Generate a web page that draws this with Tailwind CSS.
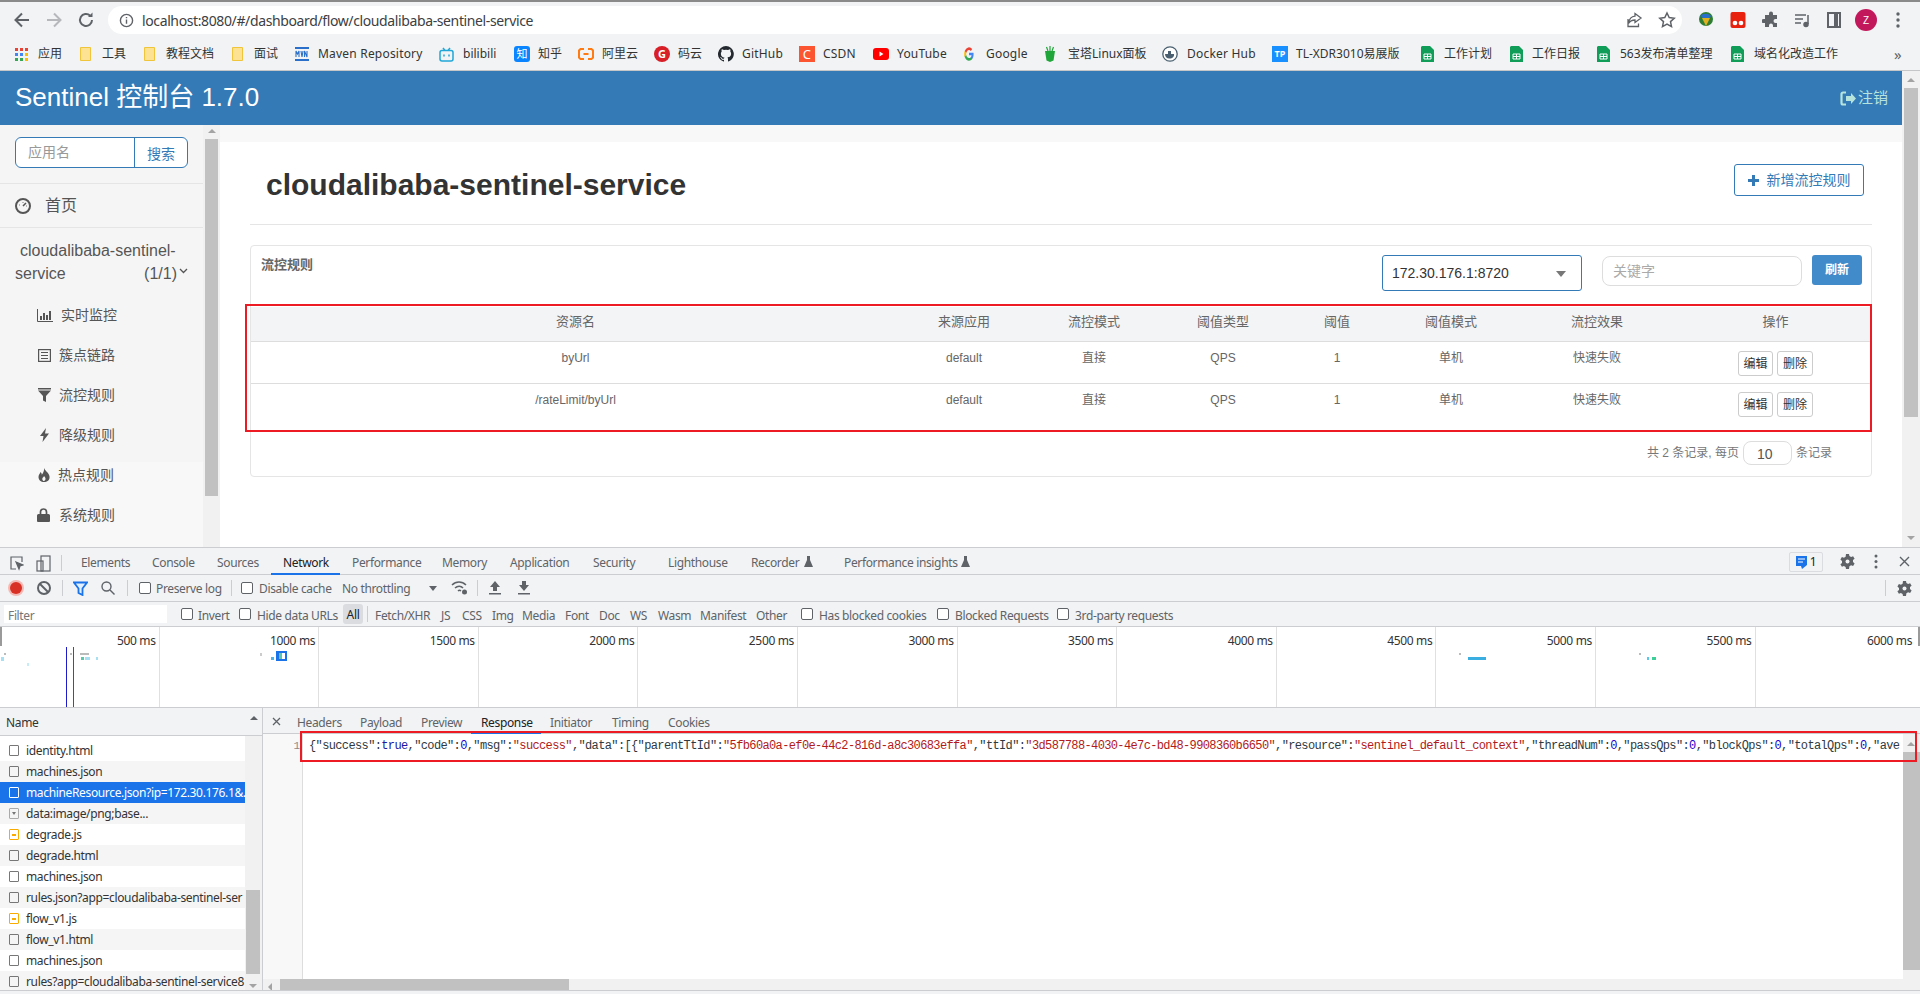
<!DOCTYPE html>
<html lang="en">
<head>
    <meta charset="UTF-8">
    <title>Sentinel Dashboard</title>
    <script src="https://cdn.jsdelivr.net/npm/@tailwindcss/browser@4"></script>
</head>
<body class="w-[1920px] h-[994px] overflow-hidden bg-[#f1f3f4] flex flex-col [font-family:'Liberation_Sans','Noto_Sans_CJK_SC',sans-serif]">

    <!-- browser toolbar -->
    <div class="h-[38px] shrink-0 flex items-center bg-[#f1f3f4] border-t-2 border-[#8a8a8a] relative">
        <svg class="ml-[12px] w-[20px] h-[20px]" viewBox="0 0 20 20" fill="none" stroke="#5f6368" stroke-width="2"><path d="M17 10H4M10 3.5 3.5 10l6.5 6.5"/></svg>
        <svg class="ml-[12px] w-[20px] h-[20px]" viewBox="0 0 20 20" fill="none" stroke="#b5b7ba" stroke-width="2"><path d="M3 10h13M10 3.5l6.500 6.500-6.500 6.500"/></svg>
        <svg class="ml-[12px] w-[20px] h-[20px]" viewBox="0 0 20 20" fill="none" stroke="#5f6368" stroke-width="2"><path d="M16 10a6 6 0 1 1-1.800-4.300"/><path d="M16.500 2.500v4.500H12" fill="#5f6368" stroke="none"/></svg>
        <div class="ml-[12px] w-[1574px] h-[28px] bg-white rounded-full flex items-center">
            <svg class="ml-[11px] w-[15px] h-[15px]" viewBox="0 0 16 16" fill="none" stroke="#5f6368" stroke-width="1.500"><circle cx="8" cy="8" r="6.500"/><path d="M8 7v4.500M8 4.200v1.500"/></svg>
            <span class="ml-[8px] text-[14px] text-[#3c4043] [font-family:'Noto_Sans',sans-serif] tracking-[-0.380px]">localhost:8080/#/dashboard/flow/cloudalibaba-sentinel-service</span>
            <svg class="ml-auto w-[18px] h-[18px]" viewBox="0 0 18 18" fill="none" stroke="#5f6368" stroke-width="1.300"><path d="M10 2.500 16 7l-6 4.500V9c-3 0-5 1-6.500 3.500C4 9 6 5.500 10 5.200zM3 8v7.500h10.500v-3"/></svg>
            <svg class="ml-[15px] mr-[6px] w-[18px] h-[18px]" viewBox="0 0 18 18" fill="none" stroke="#5f6368" stroke-width="1.500"><path d="m9 2 2.200 4.600 5 .6-3.700 3.400 1 5L9 13.100l-4.500 2.500 1-5L1.800 7.200l5-.6z"/></svg>
        </div>
        <svg class="ml-[15px] w-[18px] h-[18px]" viewBox="0 0 18 18"><circle cx="9" cy="8" r="7" fill="#2f7d32"/><path d="M3 5c3-3 8-3 11 0l-4 5z" fill="#2a6fc9"/><path d="M9 7h4l-4 8-4-8z" fill="#e0b020"/></svg>
        <svg class="ml-[15px] w-[16px] h-[18px]" viewBox="0 0 16 18"><rect x="0.500" y="1" width="15" height="16" rx="2" fill="#e8210f"/><circle cx="5" cy="12" r="2.300" fill="#fff"/><circle cx="11" cy="12" r="2.300" fill="#fff"/></svg>
        <svg class="ml-[16px] w-[18px] h-[18px]" viewBox="0 0 18 18" fill="#5f6368"><path d="M7 2.500a2 2 0 0 1 4 0V4h4v4h-1.500a2 2 0 0 0 0 4H15v4h-4v-1.500a2 2 0 0 0-4 0V16H3v-4H1.500a2 2 0 0 1 0-4H3V4h4z"/></svg>
        <svg class="ml-[13px] w-[18px] h-[18px]" viewBox="0 0 18 18" fill="none" stroke="#5f6368" stroke-width="1.500"><path d="M2 4h11M2 8h8M2 12h6M15 4v9"/><circle cx="13" cy="13.500" r="2" fill="#5f6368"/></svg>
        <svg class="ml-[14px] w-[18px] h-[18px]" viewBox="0 0 18 18" fill="none" stroke="#5f6368" stroke-width="2"><rect x="3" y="2" width="12" height="14"/><path d="M11 2v14" stroke-width="4"/></svg>
        <div class="ml-[12px] w-[22px] h-[22px] rounded-full bg-[#c2185b] text-white text-[10px] flex items-center justify-center">Z</div>
        <svg class="ml-[19px] w-[4px] h-[16px]" viewBox="0 0 4 16" fill="#5f6368"><circle cx="2" cy="2" r="1.700"/><circle cx="2" cy="8" r="1.700"/><circle cx="2" cy="14" r="1.700"/></svg>
    </div>

    <!-- bookmarks -->
    <div class="h-[33px] shrink-0 flex items-center bg-[#f1f3f4] border-b border-[#c4c6c8] pl-[15px] text-[12px] text-[#333] [font-family:'Noto_Sans','Noto_Sans_CJK_SC',sans-serif] whitespace-nowrap">
        <div class="w-[65px] flex items-center gap-[10px]">
            <svg class="w-[13px] h-[13px]" viewBox="0 0 13 13"><rect width="3" height="3" fill="#ea4335"/><rect x="5" width="3" height="3" fill="#ea4335"/><rect x="10" width="3" height="3" fill="#ea4335"/><rect y="5" width="3" height="3" fill="#4285f4"/><rect x="5" y="5" width="3" height="3" fill="#4285f4"/><rect x="10" y="5" width="3" height="3" fill="#fbbc04"/><rect y="10" width="3" height="3" fill="#34a853"/><rect x="5" y="10" width="3" height="3" fill="#34a853"/><rect x="10" y="10" width="3" height="3" fill="#fbbc04"/></svg>应用</div>
        <div class="w-[64px] flex items-center gap-[11px]"><svg class="w-[11px] h-[14px]" viewBox="0 0 11 14"><path d="M.5.5h10v13H.5z" fill="#fde293" stroke="#f0c53a"/></svg>工具</div>
        <div class="w-[88px] flex items-center gap-[11px]"><svg class="w-[11px] h-[14px]" viewBox="0 0 11 14"><path d="M.5.5h10v13H.5z" fill="#fde293" stroke="#f0c53a"/></svg>教程文档</div>
        <div class="w-[63px] flex items-center gap-[11px]"><svg class="w-[11px] h-[14px]" viewBox="0 0 11 14"><path d="M.5.5h10v13H.5z" fill="#fde293" stroke="#f0c53a"/></svg>面试</div>
        <div class="w-[144px] flex items-center gap-[9px] tracking-[0.200px]"><svg class="w-[14px] h-[14px]" viewBox="0 0 14 14"><rect width="14" height="2" fill="#2a6fc9"/><rect y="12" width="14" height="2" fill="#2a6fc9"/><path d="M1 10V4l1.500 3L4 4v6M6 4l1 6 1-6M9.500 10V4L12 10V4" fill="none" stroke="#2a6fc9" stroke-width="1.100"/></svg>Maven Repository</div>
        <div class="w-[75px] flex items-center gap-[9px]"><svg class="w-[15px] h-[15px]" viewBox="0 0 15 15" fill="none" stroke="#20a7d8" stroke-width="1.500"><rect x="1" y="3.500" width="13" height="10.500" rx="2"/><path d="M4 1l2 2.500M11 1 9 3.500M5 7.500v2M10 7.500v2"/></svg>bilibili</div>
        <div class="w-[64px] flex items-center gap-[8px]"><div class="w-[16px] h-[16px] rounded-[3px] bg-[#0a84ff] text-white text-[11px] leading-[16px] text-center">知</div>知乎</div>
        <div class="w-[76px] flex items-center gap-[8px]"><svg class="w-[16px] h-[12px]" viewBox="0 0 16 12" fill="none" stroke="#ff7a13" stroke-width="2"><path d="M6 1H2.500L1 2.500v7L2.500 11H6M10 1h3.500L15 2.500v7L13.500 11H10M5.500 6h5"/></svg>阿里云</div>
        <div class="w-[64px] flex items-center gap-[8px]"><div class="w-[16px] h-[16px] rounded-full bg-[#d81e26] text-white text-[11px] font-bold leading-[16px] text-center">G</div>码云</div>
        <div class="w-[81px] flex items-center gap-[8px] tracking-[0.200px]"><svg class="w-[16px] h-[16px]" viewBox="0 0 16 16" fill="#24292f"><path d="M8 0a8 8 0 0 0-2.500 15.600c.4.100.5-.2.500-.4v-1.400c-2.200.5-2.700-1-2.700-1-.4-.9-.9-1.200-.9-1.200-.7-.5.100-.5.100-.5.800.100 1.200.8 1.200.8.700 1.200 1.900.9 2.300.7.100-.5.300-.9.500-1.100-1.800-.2-3.600-.9-3.600-4 0-.9.300-1.600.8-2.100-.1-.2-.4-1 .1-2.100 0 0 .7-.2 2.200.8a7.600 7.600 0 0 1 4 0c1.500-1 2.200-.8 2.200-.8.400 1.100.2 1.900.1 2.100.5.600.8 1.300.8 2.100 0 3.100-1.900 3.700-3.700 3.900.3.300.6.800.6 1.500v2.200c0 .2.100.5.600.4A8 8 0 0 0 8 0z"/></svg>GitHub</div>
        <div class="w-[74px] flex items-center gap-[8px] tracking-[0.200px]"><div class="w-[16px] h-[16px] bg-[#fc5531] text-white text-[13px] leading-[16px] text-center">C</div>CSDN</div>
        <div class="w-[91px] flex items-center gap-[8px] tracking-[0.200px]"><svg class="w-[16px] h-[12px]" viewBox="0 0 16 12"><rect width="16" height="12" rx="3" fill="#f00"/><path d="m6.500 3.500 4 2.500-4 2.500z" fill="#fff"/></svg>YouTube</div>
        <div class="w-[80px] flex items-center gap-[12px] tracking-[0.200px]"><svg class="w-[10px] h-[14px]" viewBox="0 0 24 24" preserveAspectRatio="none"><path d="M23 12.300c0-.8-.1-1.500-.2-2.300H12v4.300h6.200a5.300 5.300 0 0 1-2.300 3.500v2.900h3.700c2.100-2 3.400-4.900 3.400-8.400z" fill="#4285f4"/><path d="M12 23.500c3.100 0 5.700-1 7.600-2.800l-3.700-2.900c-1 .7-2.300 1.100-3.900 1.100-3 0-5.500-2-6.400-4.800H1.800v3A11.500 11.500 0 0 0 12 23.500z" fill="#34a853"/><path d="M5.600 14.100a7 7 0 0 1 0-4.400v-3H1.800a11.500 11.500 0 0 0 0 10.400z" fill="#fbbc04"/><path d="M12 5c1.700 0 3.200.6 4.400 1.700l3.300-3.300A11.500 11.500 0 0 0 1.800 6.700l3.800 3C6.500 7 9 5 12 5z" fill="#ea4335"/></svg>Google</div>
        <div class="w-[118px] flex items-center gap-[12px]"><svg class="w-[12px] h-[16px]" viewBox="0 0 12 16"><path d="M1 5h10l-1.500 9.500L6 16l-3.500-1.500z" fill="#20a53a"/><path d="M6 0v5M2.500 1 4 5M9.500 1 8 5" stroke="#20a53a" stroke-width="1.200"/></svg>宝塔Linux面板</div>
        <div class="w-[110px] flex items-center gap-[9px] tracking-[0.200px]"><svg class="w-[16px] h-[16px]" viewBox="0 0 16 16"><circle cx="8" cy="8" r="7.200" fill="#fff" stroke="#4a6070" stroke-width="1.300"/><path d="M3 8h9c.5 2.500-1.500 4.500-4.500 4.500S3 10.500 3 8z" fill="#4a6070"/><rect x="6" y="5" width="3" height="3" fill="#4a6070"/></svg>Docker Hub</div>
        <div class="w-[149px] flex items-center gap-[8px]"><div class="w-[16px] h-[16px] bg-[#1890ff] text-white text-[9px] font-bold leading-[16px] text-center">TP</div>TL-XDR3010易展版</div>
        <div class="w-[89px] flex items-center gap-[10px]"><svg class="w-[13px] h-[16px]" viewBox="0 0 13 16"><path d="M1 0h8l4 4v12H0V1z" fill="#0f9d58"/><path d="M3 8h7v5H3zM6.500 8v5M3 10.500h7" fill="none" stroke="#fff"/></svg>工作计划</div>
        <div class="w-[87px] flex items-center gap-[9px]"><svg class="w-[13px] h-[16px]" viewBox="0 0 13 16"><path d="M1 0h8l4 4v12H0V1z" fill="#0f9d58"/><path d="M3 8h7v5H3zM6.500 8v5M3 10.500h7" fill="none" stroke="#fff"/></svg>工作日报</div>
        <div class="w-[134px] flex items-center gap-[10px]"><svg class="w-[13px] h-[16px]" viewBox="0 0 13 16"><path d="M1 0h8l4 4v12H0V1z" fill="#0f9d58"/><path d="M3 8h7v5H3zM6.500 8v5M3 10.500h7" fill="none" stroke="#fff"/></svg>563发布清单整理</div>
        <div class="w-[163px] flex items-center gap-[10px]"><svg class="w-[13px] h-[16px]" viewBox="0 0 13 16"><path d="M1 0h8l4 4v12H0V1z" fill="#0f9d58"/><path d="M3 8h7v5H3zM6.500 8v5M3 10.500h7" fill="none" stroke="#fff"/></svg>域名化改造工作</div>
        <span class="text-[15px] text-[#5f6368]">»</span>
    </div>

    <!-- page -->
    <div class="h-[476px] shrink-0 flex bg-white">
        <div class="w-[1902px] flex flex-col">
            <div class="h-[54px] shrink-0 bg-[#337ab7] flex items-center justify-between pl-[15px] pr-[14px]">
                <span class="text-[26px] text-white -mt-[2px]">Sentinel 控制台 1.7.0</span>
                <span class="flex items-center gap-[1px] text-[15px] text-[#b7e3dd]">
                    <svg class="w-[17px] h-[15px]" viewBox="0 0 17 15"><path d="M6 1.500H3A1.500 1.500 0 0 0 1.500 3v9A1.500 1.500 0 0 0 3 13.500h3" fill="none" stroke="#b7e3dd" stroke-width="2.200"/><path d="M6 5h5V2l5 5.500-5 5.500V10H6z" fill="#b7e3dd"/></svg>注销</span>
            </div>
            <div class="flex flex-1 min-h-0">
                <!-- sidebar -->
                <div class="w-[203px] shrink-0 flex flex-col text-[#555] relative bg-[#f8f8f8]">
                    <div class="h-[337px] bg-[#f5f5f5] flex flex-col">
                        <div class="h-[59px] shrink-0 border-b border-[#e5e5e5] pl-[15px] pt-[12px]">
                            <div class="w-[173px] h-[31px] flex border border-[#337ab7] rounded-[6px] bg-white text-[14px]">
                                <div class="w-[119px] border-r border-[#337ab7] pl-[12px] leading-[28px] text-[#999]">应用名</div>
                                <div class="flex-1 text-center leading-[32px] text-[#337ab7]">搜索</div>
                            </div>
                        </div>
                        <div class="h-[44px] shrink-0 border-b border-[#e5e5e5] flex items-center pl-[15px] gap-[14px] text-[16px]">
                            <svg class="w-[16px] h-[16px]" viewBox="0 0 16 16" fill="none" stroke="#555" stroke-width="2"><circle cx="8" cy="8" r="7"/><path d="M8 8l3-3M4 7h.5M8 4v.5M12 8h-.5" stroke-width="1.500"/></svg>
                            首页
                        </div>
                        <div class="pl-[15px] pt-[11px] text-[16px] leading-[23px] w-[188px]">
                            <div class="pl-[5px]">cloudalibaba-sentinel-</div>
                            <div class="flex items-center">service<span class="ml-auto">(1/1)</span>
                                <svg class="ml-[2px] w-[9px] h-[6px] -mt-[5px]" viewBox="0 0 9 6" fill="none" stroke="#555" stroke-width="1.300"><path d="m1 1 3.500 3.500L8 1"/></svg>
                            </div>
                        </div>
                        <div class="mt-[10px] flex flex-col text-[14px]">
                            <div class="h-[40px] flex items-center pl-[37px] gap-[8px]"><svg class="w-[16px] h-[13px]" viewBox="0 0 16 13" fill="none" stroke="#555"><path d="M.5 0v12.500H16" /><path d="M4 11V7M7 11V4M10 11V6M13 11V2" stroke-width="2"/></svg>实时监控</div>
                            <div class="h-[40px] flex items-center pl-[38px] gap-[8px]"><svg class="w-[13px] h-[13px]" viewBox="0 0 13 13" fill="none" stroke="#555" stroke-width="1.200"><rect x=".6" y=".6" width="11.800" height="11.800"/><path d="M3 3.500h7M3 6.500h7M3 9.500h7"/></svg>簇点链路</div>
                            <div class="h-[40px] flex items-center pl-[38px] gap-[8px]"><svg class="w-[13px] h-[14px]" viewBox="0 0 13 14" fill="#555"><path d="M0 0h13v1.500H0zM0 2.500h13L8 8v6L5 12.500V8z"/></svg>流控规则</div>
                            <div class="h-[40px] flex items-center pl-[40px] gap-[10px]"><svg class="w-[9px] h-[14px]" viewBox="0 0 9 14" fill="#555"><path d="M6 0 0 8h3.500L2.500 14 9 5.500H5z"/></svg>降级规则</div>
                        </div>
                    </div>
                    <div class="flex flex-col text-[14px]">
                        <div class="h-[40px] -mt-[7px] flex items-center pl-[38px] gap-[8px]"><svg class="w-[12px] h-[14px]" viewBox="0 0 12 14" fill="#555"><path d="M6 0c1 3 5 4.500 5.500 8.500S9 14 6 14s-5.500-2-5.500-5C.5 7 2 5.500 2.500 4c1 .8 1.300 1.800 1.300 2.800C5 5 6.500 3 6 0z"/><path d="M6 8c.8 1.200 1.800 2 1.500 3.300S6.500 13 6 13s-1.700-.5-1.700-2S5.500 9.500 6 8z" fill="#f8f8f8"/></svg>热点规则</div>
                        <div class="h-[40px] flex items-center pl-[37px] gap-[9px]"><svg class="w-[13px] h-[14px]" viewBox="0 0 13 14" fill="#555"><path d="M1.500 6h10A1.500 1.500 0 0 1 13 7.500V13a1 1 0 0 1-1 1H1a1 1 0 0 1-1-1V7.500A1.500 1.500 0 0 1 1.500 6z"/><path d="M3.500 6V4a3 3 0 0 1 6 0v2" fill="none" stroke="#555" stroke-width="1.700"/></svg>系统规则</div>
                    </div>
                </div>
                <!-- sidebar scrollbar -->
                <div class="w-[17px] shrink-0 bg-[#f1f1f1] flex flex-col items-center pt-[4px]">
                    <div class="w-0 h-0 border-x-[4px] border-x-transparent border-b-[4px] border-b-[#a3a3a3]"></div>
                    <div class="w-[13px] h-[357px] mt-[6px] bg-[#c1c1c1]"></div>
                </div>
                <!-- main -->
                <div class="flex-1 min-w-0 flex flex-col">
                    <div class="h-[17px] shrink-0 bg-[#f8f8f8]"></div>
                    <div class="flex-1 px-[30px]">
                        <div class="h-[83px] border-b border-[#e5e5e5] flex justify-between items-start">
                            <h1 class="ml-[16px] mt-[23px] text-[30px] leading-[40px] font-bold text-[#333]">cloudalibaba-sentinel-service</h1>
                            <button class="mr-[8px] mt-[22px] w-[130px] h-[32px] border border-[#337ab7] rounded-[3px] text-[14px] text-[#337ab7] flex items-center justify-center gap-[8px] bg-white">
                                <svg class="w-[11px] h-[11px]" viewBox="0 0 11 11" fill="#337ab7"><path d="M4 0h3v4h4v3H7v4H4V7H0V4h4z"/></svg>新增流控规则</button>
                        </div>
                        <div class="relative mt-[20px] h-[232px] border border-[#e5e5e5] rounded-[4px]">
                            <div class="flex h-[60px] pl-[10px] pr-[9px] pt-[9px]">
                                <div class="text-[13px] font-bold text-[#666] leading-[20px]">流控规则</div>
                                <div class="ml-auto relative w-[200px] h-[36px] border border-[#337ab7] rounded-[3px] pl-[9px] text-[14px] leading-[34px] text-[#333]">172.30.176.1:8720
                                    <div class="absolute right-[15px] top-[15px] w-0 h-0 border-x-[5px] border-x-transparent border-t-[6px] border-t-[#777]"></div>
                                </div>
                                <div class="ml-[20px] w-[200px] h-[30px] border border-[#ddd] rounded-[8px] pl-[10px] text-[14px] leading-[28px] text-[#aaa] mt-[1px]">关键字</div>
                                <button class="ml-[10px] w-[50px] h-[30px] bg-[#428bca] rounded-[3px] text-white text-[12px] font-bold">刷新</button>
                            </div>
                            <div class="grid grid-cols-[649px_128px_132px_126px_102px_126px_166px_191px] text-center text-[12px] text-[#666]">
                                <div class="col-span-8 grid grid-cols-subgrid h-[35px] mt-px bg-[#f3f4f6] border-b border-[#ddd] text-[13px] leading-[30px]">
                                    <div>资源名</div><div>来源应用</div><div>流控模式</div><div>阈值类型</div><div>阈值</div><div>阈值模式</div><div>流控效果</div><div>操作</div>
                                </div>
                                <div class="col-span-8 grid grid-cols-subgrid h-[42px] border-b border-[#ddd] pt-[7px] leading-[18px]">
                                    <div>byUrl</div><div>default</div><div>直接</div><div>QPS</div><div>1</div><div>单机</div><div>快速失败</div>
                                    <div class="flex justify-center gap-[4px] pt-[2px]">
                                        <button class="w-[35px] h-[25px] border border-[#ccc] rounded-[3px] text-[#333] bg-white">编辑</button>
                                        <button class="w-[36px] h-[25px] border border-[#ccc] rounded-[3px] text-[#333] bg-white">删除</button>
                                    </div>
                                </div>
                                <div class="col-span-8 grid grid-cols-subgrid h-[42px] pt-[7px] leading-[18px]">
                                    <div>/rateLimit/byUrl</div><div>default</div><div>直接</div><div>QPS</div><div>1</div><div>单机</div><div>快速失败</div>
                                    <div class="flex justify-center gap-[4px] pt-[1px]">
                                        <button class="w-[35px] h-[25px] border border-[#ccc] rounded-[3px] text-[#333] bg-white">编辑</button>
                                        <button class="w-[36px] h-[25px] border border-[#ccc] rounded-[3px] text-[#333] bg-white">删除</button>
                                    </div>
                                </div>
                            </div>
                            <div class="flex justify-end items-center gap-[4px] pr-[39px] mt-[15px] text-[12px] text-[#777]">
                                <span>共 2 条记录, 每页</span>
                                <div class="w-[49px] h-[24px] border border-[#ddd] rounded-[8px] text-[14px] text-[#555] leading-[24px] pl-[13px]">10</div>
                                <span>条记录</span>
                            </div>
                            <!-- red annotation -->
                            <div class="absolute left-[-6px] top-[58px] w-[1627px] h-[128px] border-2 border-[#ed1c24]"></div>
                        </div>
                    </div>
                </div>
            </div>
        </div>
        <!-- page scrollbar -->
        <div class="w-[18px] shrink-0 bg-[#f1f1f1] flex flex-col items-center pt-[7px]">
            <div class="w-0 h-0 border-x-[4px] border-x-transparent border-b-[4px] border-b-[#a3a3a3]"></div>
            <div class="w-[14px] h-[329px] mt-[6px] bg-[#c1c1c1]"></div>
            <div class="mt-auto mb-[7px] w-0 h-0 border-x-[4px] border-x-transparent border-t-[4px] border-t-[#a3a3a3]"></div>
        </div>
    </div>

    <!-- devtools -->
    <div class="flex-1 min-h-0 flex flex-col border-t border-[#cbcdd1] bg-[#f1f3f4] text-[12px] tracking-[-0.350px] text-[#5f6368] [font-family:'Noto_Sans',sans-serif] whitespace-nowrap">
        <!-- tabs -->
        <div class="h-[27px] shrink-0 flex items-center border-b border-[#cbcdd1] relative pt-[4px]">
            <svg class="ml-[10px] w-[14px] h-[15px]" viewBox="0 0 14 15" fill="none" stroke="#5f6368" stroke-width="1.200"><path d="M6 13H1V1h11v5"/><path d="m6 6 7 3-3 1-1 3z" fill="#5f6368"/></svg>
            <svg class="ml-[12px] w-[15px] h-[17px]" viewBox="0 0 15 17" fill="none" stroke="#5f6368" stroke-width="1.200"><rect x="5" y="1" width="9" height="15"/><rect x="1" y="6" width="6" height="10"/></svg>
            <div class="ml-[10px] w-px h-[16px] bg-[#cbcdd1]"></div>
            <span class="absolute left-[81px]">Elements</span>
            <span class="absolute left-[152px]">Console</span>
            <span class="absolute left-[217px]">Sources</span>
            <span class="absolute left-[283px] text-[#202124]">Network</span>
            <div class="absolute left-[271px] bottom-[-1px] w-[69px] h-[2px] bg-[#1a73e8]"></div>
            <span class="absolute left-[352px]">Performance</span>
            <span class="absolute left-[442px]">Memory</span>
            <span class="absolute left-[510px]">Application</span>
            <span class="absolute left-[593px]">Security</span>
            <span class="absolute left-[668px]">Lighthouse</span>
            <span class="absolute left-[751px]">Recorder</span>
            <svg class="absolute left-[804px] top-[8px] w-[9px] h-[11px]" viewBox="0 0 9 11" fill="#5f6368"><path d="M3 0h3v4l3 7H0l3-7z"/></svg>
            <span class="absolute left-[844px]">Performance insights</span>
            <svg class="absolute left-[961px] top-[8px] w-[9px] h-[11px]" viewBox="0 0 9 11" fill="#5f6368"><path d="M3 0h3v4l3 7H0l3-7z"/></svg>
            <div class="absolute left-[1789px] top-[4px] w-[34px] h-[20px] border border-[#dadce0] rounded-[2px] flex items-center justify-center gap-[3px] text-[#202124]">
                <svg class="w-[11px] h-[13px]" viewBox="0 0 11 13"><path d="M0 0h11v9l-5 4-1-3H0z" fill="#1a73e8"/><path d="M2 3h7M2 6h5" stroke="#fff"/></svg>1</div>
            <svg class="absolute left-[1840px] top-[6px] w-[15px] h-[15px]" viewBox="0 0 15 15" fill="#5f6368"><path d="M6 0h3l.4 2 1.700 1 2-.8 1.500 2.600-1.600 1.300v2l1.600 1.300-1.500 2.600-2-.8-1.700 1L9 15H6l-.4-2-1.700-1-2 .8L.4 10.200 2 8.900v-2L.4 5.600l1.500-2.600 2 .8 1.700-1z"/><circle cx="7.500" cy="7.500" r="2" fill="#f1f3f4"/></svg>
            <svg class="absolute left-[1874px] top-[6px] w-[4px] h-[15px]" viewBox="0 0 4 15" fill="#5f6368"><circle cx="2" cy="2" r="1.500"/><circle cx="2" cy="7.500" r="1.500"/><circle cx="2" cy="13" r="1.500"/></svg>
            <svg class="absolute left-[1899px] top-[8px] w-[11px] h-[11px]" viewBox="0 0 11 11" stroke="#5f6368" stroke-width="1.400"><path d="m1 1 9 9M10 1l-9 9"/></svg>
        </div>
        <!-- network toolbar -->
        <div class="h-[27px] shrink-0 border-b border-[#cbcdd1] relative flex items-center pt-[2px]">
            <div class="absolute left-[10px] top-[7px] w-[12px] h-[12px] rounded-full bg-[#d93025] ring-2 ring-[#f4b9b4]"></div>
            <svg class="absolute left-[37px] top-[6px] w-[14px] h-[14px]" viewBox="0 0 14 14" fill="none" stroke="#5f6368" stroke-width="2"><circle cx="7" cy="7" r="6"/><path d="m3 3 8 8"/></svg>
            <div class="absolute left-[62px] top-[5px] w-px h-[16px] bg-[#cbcdd1]"></div>
            <svg class="absolute left-[73px] top-[6px] w-[15px] h-[15px]" viewBox="0 0 15 15" fill="#e3f0ff" stroke="#1a73e8" stroke-width="1.800"><path d="M1 1.500h13L9.500 7.500V14l-4-2V7.500z"/></svg>
            <svg class="absolute left-[101px] top-[6px] w-[14px] h-[14px]" viewBox="0 0 14 14" fill="none" stroke="#5f6368" stroke-width="1.400"><circle cx="5.500" cy="5.500" r="4.500"/><path d="m9 9 4.500 4.500"/></svg>
            <div class="absolute left-[127px] top-[5px] w-px h-[16px] bg-[#cbcdd1]"></div>
            <span class="absolute left-[139px] top-[7px] w-[12px] h-[12px] border border-[#5f6368] rounded-[2px] bg-white"></span>
            <span class="absolute left-[156px]">Preserve log</span>
            <div class="absolute left-[231px] top-[5px] w-px h-[16px] bg-[#cbcdd1]"></div>
            <span class="absolute left-[241px] top-[7px] w-[12px] h-[12px] border border-[#5f6368] rounded-[2px] bg-white"></span>
            <span class="absolute left-[259px]">Disable cache</span>
            <span class="absolute left-[342px]">No throttling</span>
            <div class="absolute left-[429px] top-[11px] w-0 h-0 border-x-[4px] border-x-transparent border-t-[5px] border-t-[#5f6368]"></div>
            <svg class="absolute left-[451px] top-[5px] w-[17px] h-[16px]" viewBox="0 0 17 16" fill="none" stroke="#5f6368" stroke-width="1.500"><path d="M1 5c4-4 10-4 14 0M4 8c2.500-2.500 6-2.500 8 0M7 11c1-1 2-1 3 0"/><circle cx="13.500" cy="12" r="2.500" fill="#5f6368" stroke="none"/></svg>
            <div class="absolute left-[477px] top-[5px] w-px h-[16px] bg-[#cbcdd1]"></div>
            <svg class="absolute left-[489px] top-[6px] w-[12px] h-[14px]" viewBox="0 0 12 14" fill="#5f6368"><path d="M6 0l5 6H8v4H4V6H1zM0 12h12v1.500H0z"/></svg>
            <svg class="absolute left-[518px] top-[6px] w-[12px] h-[14px]" viewBox="0 0 12 14" fill="#5f6368"><path d="M4 0h4v4h3l-5 6-5-6h3zM0 12h12v1.500H0z"/></svg>
            <div class="absolute left-[1885px] top-[5px] w-px h-[16px] bg-[#cbcdd1]"></div>
            <svg class="absolute left-[1897px] top-[6px] w-[15px] h-[15px]" viewBox="0 0 15 15" fill="#5f6368"><path d="M6 0h3l.4 2 1.700 1 2-.8 1.500 2.600-1.600 1.300v2l1.600 1.300-1.500 2.600-2-.8-1.700 1L9 15H6l-.4-2-1.700-1-2 .8L.4 10.200 2 8.900v-2L.4 5.600l1.500-2.600 2 .8 1.700-1z"/><circle cx="7.500" cy="7.500" r="2" fill="#f1f3f4"/></svg>
        </div>
        <!-- filter bar -->
        <div class="h-[25px] shrink-0 border-b border-[#cbcdd1] relative flex items-center pt-[4px]">
            <div class="absolute left-[4px] top-[3px] w-[163px] h-[18px] bg-white pl-[4px] leading-[22px] text-[#757575] overflow-hidden">Filter</div>
            <span class="absolute left-[181px] top-[6px] w-[12px] h-[12px] border border-[#5f6368] rounded-[2px] bg-white"></span>
            <span class="absolute left-[198px]">Invert</span>
            <span class="absolute left-[239px] top-[6px] w-[12px] h-[12px] border border-[#5f6368] rounded-[2px] bg-white"></span>
            <span class="absolute left-[257px]">Hide data URLs</span>
            <span class="absolute left-[343px] top-[2px] w-[20px] h-[20px] bg-[#dadce0] rounded-[3px] text-center leading-[22px] text-[#202124]">All</span>
            <div class="absolute left-[367px] top-[4px] w-px h-[16px] bg-[#cbcdd1]"></div>
            <span class="absolute left-[375px]">Fetch/XHR</span>
            <span class="absolute left-[441px]">JS</span>
            <span class="absolute left-[462px]">CSS</span>
            <span class="absolute left-[492px]">Img</span>
            <span class="absolute left-[522px]">Media</span>
            <span class="absolute left-[565px]">Font</span>
            <span class="absolute left-[599px]">Doc</span>
            <span class="absolute left-[630px]">WS</span>
            <span class="absolute left-[658px]">Wasm</span>
            <span class="absolute left-[700px]">Manifest</span>
            <span class="absolute left-[756px]">Other</span>
            <span class="absolute left-[801px] top-[6px] w-[12px] h-[12px] border border-[#5f6368] rounded-[2px] bg-white"></span>
            <span class="absolute left-[819px]">Has blocked cookies</span>
            <span class="absolute left-[937px] top-[6px] w-[12px] h-[12px] border border-[#5f6368] rounded-[2px] bg-white"></span>
            <span class="absolute left-[955px]">Blocked Requests</span>
            <span class="absolute left-[1057px] top-[6px] w-[12px] h-[12px] border border-[#5f6368] rounded-[2px] bg-white"></span>
            <span class="absolute left-[1075px]">3rd-party requests</span>
        </div>
        <!-- overview -->
        <div class="h-[81px] shrink-0 border-b border-[#cbcdd1] bg-white relative flex text-[#333]">
            <div class="w-[159.600px] shrink-0 border-r border-[#e0e0e0] text-right pr-[3px] pt-[5px]">500 ms</div>
            <div class="w-[159.600px] shrink-0 border-r border-[#e0e0e0] text-right pr-[3px] pt-[5px]">1000 ms</div>
            <div class="w-[159.600px] shrink-0 border-r border-[#e0e0e0] text-right pr-[3px] pt-[5px]">1500 ms</div>
            <div class="w-[159.600px] shrink-0 border-r border-[#e0e0e0] text-right pr-[3px] pt-[5px]">2000 ms</div>
            <div class="w-[159.600px] shrink-0 border-r border-[#e0e0e0] text-right pr-[3px] pt-[5px]">2500 ms</div>
            <div class="w-[159.600px] shrink-0 border-r border-[#e0e0e0] text-right pr-[3px] pt-[5px]">3000 ms</div>
            <div class="w-[159.600px] shrink-0 border-r border-[#e0e0e0] text-right pr-[3px] pt-[5px]">3500 ms</div>
            <div class="w-[159.600px] shrink-0 border-r border-[#e0e0e0] text-right pr-[3px] pt-[5px]">4000 ms</div>
            <div class="w-[159.600px] shrink-0 border-r border-[#e0e0e0] text-right pr-[3px] pt-[5px]">4500 ms</div>
            <div class="w-[159.600px] shrink-0 border-r border-[#e0e0e0] text-right pr-[3px] pt-[5px]">5000 ms</div>
            <div class="w-[159.600px] shrink-0 border-r border-[#e0e0e0] text-right pr-[3px] pt-[5px]">5500 ms</div>
            <div class="w-[159.600px] shrink-0 text-right pr-[3px] pt-[5px]">6000 ms</div>
            <div class="absolute left-0 top-0 w-[2px] h-[19px] bg-[#9a9a9a]"></div>
            <div class="absolute right-0 top-0 w-[2px] h-[19px] bg-[#9a9a9a]"></div>
            <div class="absolute left-[66px] top-[20px] w-px h-[60px] bg-[#1c1cc8]"></div>
            <div class="absolute left-[73px] top-[20px] w-px h-[60px] bg-[#d01c1c]"></div>
            <div class="absolute left-[4px] top-[26px] w-[2px] h-[2px] bg-[#bbb]"></div>
            <div class="absolute left-[1px] top-[30px] w-[3px] h-[4px] bg-[#a8dff2]"></div>
            <div class="absolute left-[27px] top-[36px] w-[2px] h-[3px] bg-[#c8ecf6]"></div>
            <div class="absolute left-[70px] top-[26px] w-[2px] h-[2px] bg-[#bbb]"></div>
            <div class="absolute left-[80px] top-[26px] w-[9px] h-[2px] bg-[#bbb]"></div>
            <div class="absolute left-[81px] top-[30px] w-[3px] h-[3px] bg-[#5bc8a8]"></div>
            <div class="absolute left-[85px] top-[30px] w-[5px] h-[3px] bg-[#a8dff2]"></div>
            <div class="absolute left-[96px] top-[30px] w-[2px] h-[3px] bg-[#a8dff2]"></div>
            <div class="absolute left-[260px] top-[26px] w-[2px] h-[3px] bg-[#ccc]"></div>
            <div class="absolute left-[271px] top-[30px] w-[3px] h-[3px] bg-[#4db4e8]"></div>
            <div class="absolute left-[276px] top-[24px] w-[11px] h-[10px] bg-[#1a73e8] flex items-center justify-center"><div class="w-[3px] h-[6px] bg-[#5bc8a8]"></div><div class="w-[3px] h-[6px] bg-white"></div></div>
            <div class="absolute left-[1459px] top-[26px] w-[2px] h-[2px] bg-[#bbb]"></div>
            <div class="absolute left-[1468px] top-[30px] w-[18px] h-[3px] bg-[#3aaee0]"></div>
            <div class="absolute left-[1639px] top-[26px] w-[2px] h-[2px] bg-[#bbb]"></div>
            <div class="absolute left-[1647px] top-[30px] w-[2px] h-[3px] bg-[#5bc8e8]"></div>
            <div class="absolute left-[1652px] top-[30px] w-[4px] h-[3px] bg-[#3ccf98]"></div>
        </div>
        <!-- requests and response -->
        <div class="flex-1 min-h-0 flex relative">
            <div class="w-[263px] shrink-0 flex flex-col border-r border-[#cbcdd1]">
                <div class="h-[28px] shrink-0 border-b border-[#cbcdd1] pl-[6px] pr-[17px] leading-[30px] text-[#333]">Name</div>
                <div class="flex-1 flex min-h-0">
                    <div class="w-[245px] shrink-0 pt-[4px] bg-white text-[#333] overflow-hidden">
                        <div class="h-[21px] flex items-center bg-white"><span class="shrink-0 ml-[9px] mr-[7px] w-[10px] h-[11px] border border-[#777] rounded-[1px]"></span>identity.html</div>
                        <div class="h-[21px] flex items-center bg-[#f5f5f5]"><span class="shrink-0 ml-[9px] mr-[7px] w-[10px] h-[11px] border border-[#777] rounded-[1px]"></span>machines.json</div>
                        <div class="h-[21px] flex items-center bg-[#1a73e8] text-white overflow-hidden"><span class="shrink-0 ml-[9px] mr-[7px] w-[10px] h-[11px] border border-white rounded-[1px]"></span>machineResource.json?ip=172.30.176.1&amp;.</div>
                        <div class="h-[21px] flex items-center bg-[#f5f5f5]"><span class="shrink-0 ml-[9px] mr-[7px] w-[10px] h-[11px] border border-[#aaa] rounded-[1px] flex items-center justify-center"><span class="w-0 h-0 border-x-[2px] border-x-transparent border-t-[3px] border-t-[#777]"></span></span>data:image/png;base...</div>
                        <div class="h-[21px] flex items-center bg-white"><span class="shrink-0 ml-[9px] mr-[7px] w-[10px] h-[11px] border border-[#f9ab00] rounded-[1px] flex items-center justify-center"><span class="w-[4px] h-[2px] bg-[#f9ab00]"></span></span>degrade.js</div>
                        <div class="h-[21px] flex items-center bg-[#f5f5f5]"><span class="shrink-0 ml-[9px] mr-[7px] w-[10px] h-[11px] border border-[#777] rounded-[1px]"></span>degrade.html</div>
                        <div class="h-[21px] flex items-center bg-white"><span class="shrink-0 ml-[9px] mr-[7px] w-[10px] h-[11px] border border-[#777] rounded-[1px]"></span>machines.json</div>
                        <div class="h-[21px] flex items-center bg-[#f5f5f5] overflow-hidden"><span class="shrink-0 ml-[9px] mr-[7px] w-[10px] h-[11px] border border-[#777] rounded-[1px]"></span>rules.json?app=cloudalibaba-sentinel-ser</div>
                        <div class="h-[21px] flex items-center bg-white"><span class="shrink-0 ml-[9px] mr-[7px] w-[10px] h-[11px] border border-[#f9ab00] rounded-[1px] flex items-center justify-center"><span class="w-[4px] h-[2px] bg-[#f9ab00]"></span></span>flow_v1.js</div>
                        <div class="h-[21px] flex items-center bg-[#f5f5f5]"><span class="shrink-0 ml-[9px] mr-[7px] w-[10px] h-[11px] border border-[#777] rounded-[1px]"></span>flow_v1.html</div>
                        <div class="h-[21px] flex items-center bg-white"><span class="shrink-0 ml-[9px] mr-[7px] w-[10px] h-[11px] border border-[#777] rounded-[1px]"></span>machines.json</div>
                        <div class="h-[21px] flex items-center bg-[#f5f5f5] overflow-hidden"><span class="shrink-0 ml-[9px] mr-[7px] w-[10px] h-[11px] border border-[#777] rounded-[1px]"></span>rules?app=cloudalibaba-sentinel-service8</div>
                    </div>
                    <div class="w-[17px] shrink-0 bg-[#f1f1f1] flex flex-col items-center relative">
                        <div class="absolute left-[1px] top-[154px] w-[14px] h-[84px] bg-[#c1c1c1]"></div>
                        <div class="absolute left-[4px] bottom-[6px] w-0 h-0 border-x-[4px] border-x-transparent border-t-[4px] border-t-[#a3a3a3]"></div>
                    </div>
                </div>
                <div class="absolute left-[250px] top-[8px] w-0 h-0 border-x-[4px] border-x-transparent border-b-[4px] border-b-[#5f6368]"></div>
            </div>
            <div class="flex-1 min-w-0 flex flex-col">
                <div class="h-[26px] shrink-0 border-b border-[#cbcdd1] relative">
                    <svg class="absolute left-[9px] top-[9px] w-[9px] h-[9px]" viewBox="0 0 9 9" stroke="#5f6368" stroke-width="1.300"><path d="m1 1 7 7M8 1 1 8"/></svg>
                    <span class="absolute left-[34px] top-[6px]">Headers</span>
                    <span class="absolute left-[97px] top-[6px]">Payload</span>
                    <span class="absolute left-[158px] top-[6px]">Preview</span>
                    <span class="absolute left-[218px] top-[6px] text-[#202124]">Response</span>
                    <div class="absolute left-[208px] bottom-[-1px] w-[70px] h-[2px] bg-[#1a73e8]"></div>
                    <span class="absolute left-[287px] top-[6px]">Initiator</span>
                    <span class="absolute left-[349px] top-[6px]">Timing</span>
                    <span class="absolute left-[405px] top-[6px]">Cookies</span>
                </div>
                <div class="flex-1 min-h-0 flex bg-white">
                    <div class="w-[40px] shrink-0 bg-[#f8f8f8] border-r border-[#ddd] text-right pr-[2px] pt-[4px] text-[11px] tracking-normal text-[#888] [font-family:'Liberation_Mono',monospace]">1</div>
                    <div class="flex-1 min-w-0 flex flex-col">
                        <div class="flex-1 overflow-hidden pl-[6px] pt-[3px] leading-[18px] text-[12px] tracking-[-0.630px] text-[#303942] [font-family:'Liberation_Mono',monospace]">{"success":<span class="text-[#1a1aa6]">true</span>,"code":<span class="text-[#1c00cf]">0</span>,"msg":<span class="text-[#b21a1a]">"success"</span>,"data":[{"parentTtId":<span class="text-[#b21a1a]">"5fb60a0a-ef0e-44c2-816d-a8c30683effa"</span>,"ttId":<span class="text-[#b21a1a]">"3d587788-4030-4e7c-bd48-9908360b6650"</span>,"resource":<span class="text-[#b21a1a]">"sentinel_default_context"</span>,"threadNum":<span class="text-[#1c00cf]">0</span>,"passQps":<span class="text-[#1c00cf]">0</span>,"blockQps":<span class="text-[#1c00cf]">0</span>,"totalQps":<span class="text-[#1c00cf]">0</span>,"ave</div>
                        <div class="h-[15px] shrink-0 bg-[#f1f1f1] relative -ml-[40px]">
                            <div class="absolute left-[5px] top-[4px] w-0 h-0 border-y-[4px] border-y-transparent border-r-[4px] border-r-[#a3a3a3]"></div>
                            <div class="absolute left-[17px] top-0 w-[289px] h-[15px] bg-[#c1c1c1]"></div>
                        </div>
                    </div>
                    <div class="w-[17px] shrink-0 bg-[#f1f1f1] relative">
                        <div class="absolute left-[4px] top-[8px] w-0 h-0 border-x-[4px] border-x-transparent border-b-[4px] border-b-[#a3a3a3]"></div>
                        <div class="absolute left-0 top-[18px] w-[17px] h-[218px] bg-[#c1c1c1]"></div>
                    </div>
                </div>
            </div>
            <!-- red annotation -->
            <div class="absolute left-[300px] top-[23px] w-[1617px] h-[31px] border-2 border-[#ed1c24]"></div>
            <div class="absolute left-0 right-0 bottom-0 h-[4px] bg-[#f1f3f4] border-t border-[#cbcdd1]"></div>
        </div>
    </div>
</body>
</html>
